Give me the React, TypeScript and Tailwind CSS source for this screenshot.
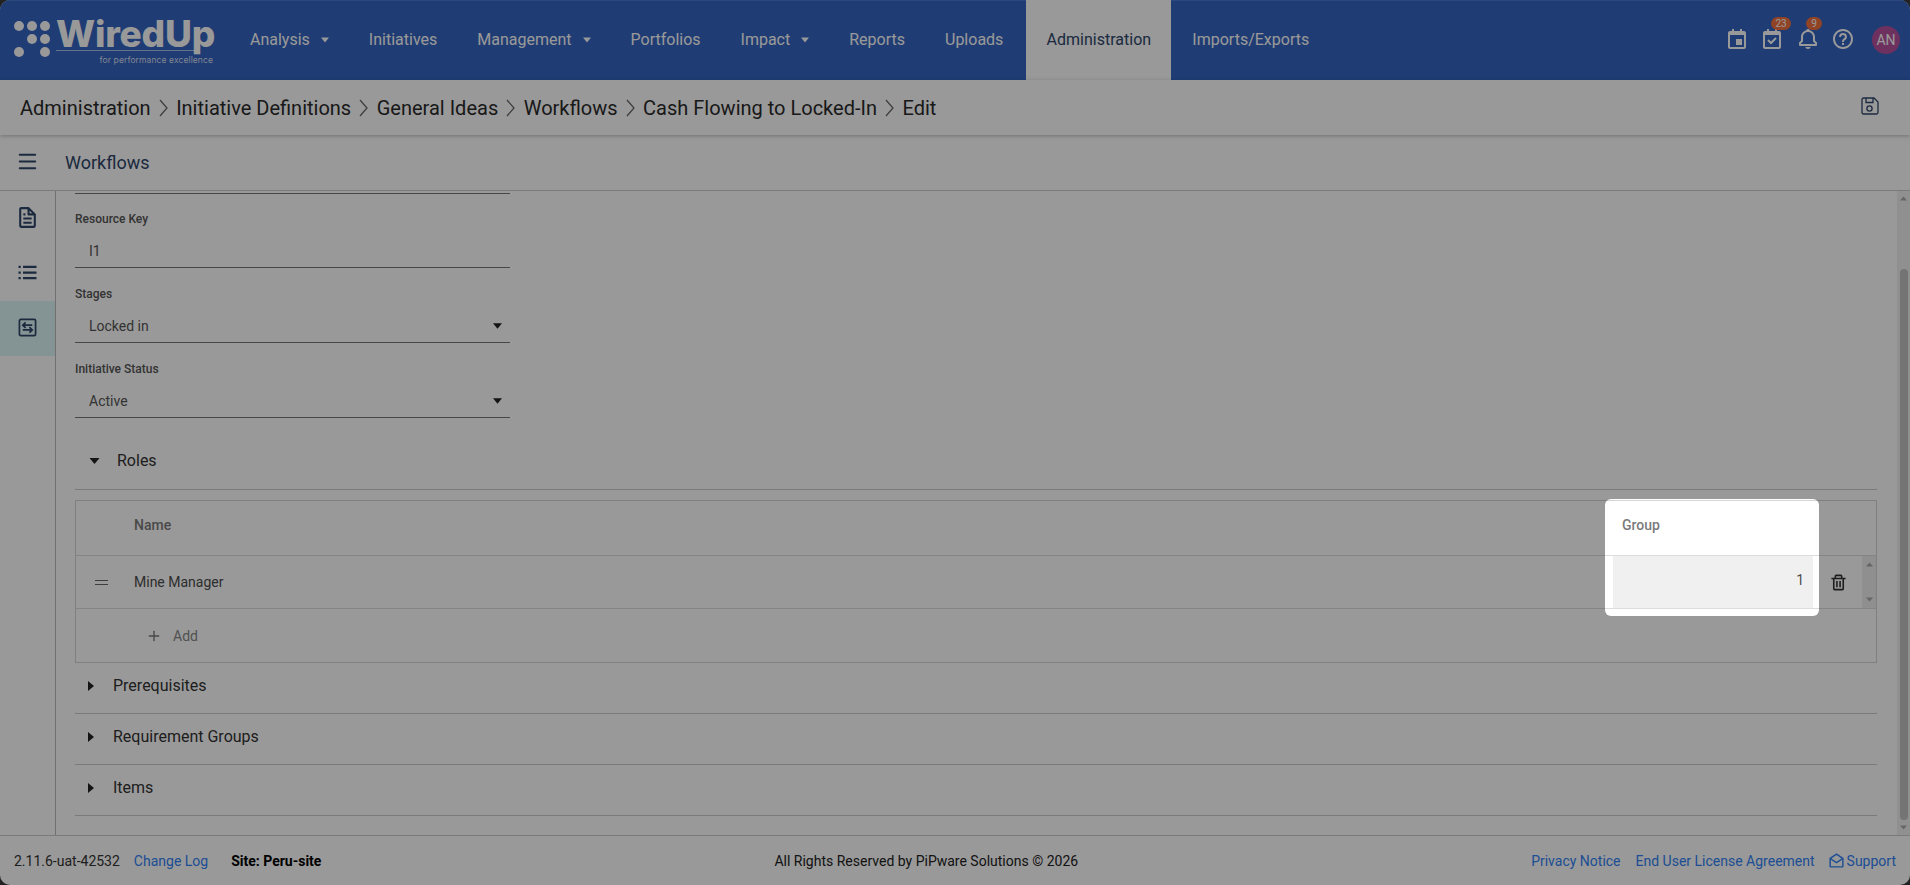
import { Menu, Plus } from 'lucide-react';
import {
  BiBell,
  BiCalendarCheck,
  BiCalendarEvent,
  BiEnvelopeOpen,
  BiFile,
  BiHelpCircle,
  BiListUl,
  BiTrash,
} from 'react-icons/bi';

const navItems = [
  { label: 'Analysis', caret: true },
  { label: 'Initiatives' },
  { label: 'Management', caret: true },
  { label: 'Portfolios' },
  { label: 'Impact', caret: true },
  { label: 'Reports' },
  { label: 'Uploads' },
  { label: 'Administration', active: true },
  { label: 'Imports/Exports' },
];

const crumbs = ['Administration', 'Initiative Definitions', 'General Ideas', 'Workflows', 'Cash Flowing to Locked-In', 'Edit'];

function Caret({ className }: { className: string }) {
  return (
    <svg viewBox="0 0 10 6" className={className} fill="currentColor">
      <path d="M0 0h10L5 6z" />
    </svg>
  );
}

function Logo() {
  return (
    <div className="flex items-start w-[230px] shrink-0 pl-[14px] pt-[16px]">
      <svg viewBox="0 0 42 42" className="w-[42px] h-[42px] mt-[4px] text-white" fill="currentColor">
        <circle cx="5" cy="5" r="5" />
        <circle cx="18" cy="5" r="5" />
        <circle cx="31" cy="5" r="5" />
        <circle cx="18" cy="18" r="5" />
        <circle cx="31" cy="18" r="5" />
        <circle cx="5" cy="31" r="5" />
        <circle cx="31" cy="31" r="5" />
      </svg>
      <div className="w-[157px] text-white font-['Inter',sans-serif]">
        <div className="text-[37px] leading-[33px] font-extrabold tracking-[-0.2px] whitespace-nowrap">WiredUp</div>
        <div className="h-px bg-[#a9c0ea] w-[142px]" />
        <div className="text-right text-[8.5px] leading-[14px] mt-[2px] tracking-[0.1px] text-[#d5dff2] whitespace-nowrap">for performance excellence</div>
      </div>
    </div>
  );
}

function TopNav() {
  return (
    <div className="flex h-[80px] shrink-0 bg-[#3464c1] border-t border-[#4a78cf]">
      <Logo />
      <div className="flex">
        {navItems.map(item => (
          <div
            key={item.label}
            className={`flex items-center gap-[11px] pb-[1px] text-base ${item.active ? 'bg-white text-[#2e4669] -mt-px ml-[3px] mr-[1px] w-[145px] justify-center' : 'px-5 text-white'}`}
          >
            <span>{item.label}</span>
            {item.caret && <Caret className="w-[8px] h-[6px] text-white" />}
          </div>
        ))}
      </div>
      <div className="ml-auto flex items-center pr-[10px] pb-[1px] text-white">
        <div className="w-[35px] flex justify-center pb-[2px]"><BiCalendarEvent size={24} /></div>
        <div className="w-[36px] flex justify-center relative pb-[2px]">
          <BiCalendarCheck size={24} />
          <span className="absolute -top-[10px] left-[17px] w-[20px] h-[13px] rounded-full bg-[#f0703f] text-[10px] leading-[13px] text-center">23</span>
        </div>
        <div className="w-[35px] flex justify-center relative pb-[2px]">
          <BiBell size={24} />
          <span className="absolute -top-[10px] left-[16px] w-[16px] h-[13px] rounded-full bg-[#f0703f] text-[10px] leading-[13px] text-center">9</span>
        </div>
        <div className="w-[36px] flex justify-center pb-[2px]"><BiHelpCircle size={24} /></div>
        <div className="ml-[11px] w-[28px] h-[28px] rounded-full bg-[#b8539f] flex items-center justify-center text-sm">AN</div>
      </div>
    </div>
  );
}

function Breadcrumbs() {
  return (
    <div className="relative z-10 flex items-center h-[55px] shrink-0 pl-[20px] pr-[31px] bg-white shadow-[0_1px_4px_rgba(0,0,0,0.25)]">
      {crumbs.map((crumb, i) => (
        <div key={crumb} className="flex items-center text-[20px] text-[#2b2b2b]">
          <span>{crumb}</span>
          {i < crumbs.length - 1 && (
            <svg viewBox="0 0 9 18" className="w-[9px] h-[18px] mx-[8.25px] text-[#666]" fill="none" stroke="currentColor" strokeWidth="1.25">
              <path d="M1 1l7 8-7 8" />
            </svg>
          )}
        </div>
      ))}
      <svg viewBox="0 0 18 18" className="ml-auto w-[18px] h-[18px] -mt-[3px] text-[#2e4669]" fill="none" stroke="currentColor" strokeWidth="1.3">
        <path d="M2.500 1h10.500l4 4v10.500a1.500 1.500 0 0 1-1.500 1.500h-13a1.500 1.500 0 0 1-1.500-1.500v-13a1.500 1.500 0 0 1 1.500-1.500z" />
        <path d="M5 1v4.500h7V1" />
        <circle cx="8.500" cy="11.500" r="2.600" />
      </svg>
    </div>
  );
}

function Field({ label, value, select, height }: { label: string; value: string; select?: boolean; height: string }) {
  return (
    <div className={`w-[435px] flex flex-col justify-end border-b border-[#777] ${height}`}>
      <div className="text-xs font-medium text-[#555] leading-[16px] mb-[7px]">{label}</div>
      <div className="flex items-center justify-between h-[33px] pl-[14px] pr-[8px] text-sm text-[#555]">
        <span>{value}</span>
        {select && <Caret className="w-[9px] h-[6px] text-[#222]" />}
      </div>
    </div>
  );
}

function Section({ label }: { label: string }) {
  return (
    <div className="flex items-center h-[51px] pb-[4px] pl-[13px] border-b border-[#ccc] text-base text-[#333]">
      <svg viewBox="0 0 6 10" className="w-[6px] h-[10px] mr-[19px] text-[#222]" fill="currentColor">
        <path d="M0 0l6 5-6 5z" />
      </svg>
      <span>{label}</span>
    </div>
  );
}

function RolesTable() {
  return (
    <div className="mt-[10px] border border-[#d5d5d5] text-sm">
      <div className="flex h-[55px] border-b border-[#ddd]">
        <div className="w-[58px] shrink-0" />
        <div className="flex-1 pt-[14px] font-medium text-[#7b7b7b]">Name</div>
        <div className="w-[200px] pt-[14px] pl-[9px] font-medium text-[#7b7b7b]">Group</div>
        <div className="w-[63px]" />
      </div>
      <div className="flex h-[53px] border-b border-[#ddd]">
        <div className="w-[58px] shrink-0 flex items-center justify-center pr-[7px]">
          <div className="w-[13px] h-[5px] border-y border-[#666]" />
        </div>
        <div className="flex-1 flex items-center text-[#4d4d4d]">Mine Manager</div>
        <div className="w-[200px] bg-[#f0f0f0] pt-[14px] pr-[9px] text-right text-[#4d4d4d]">1</div>
        <div className="w-[49px] flex items-center justify-center pl-[2px]"><BiTrash size={19} className="text-[#333]" /></div>
        <div className="w-[14px] bg-[#eee] flex flex-col items-center justify-between py-[6px]">
          <Caret className="w-[7px] h-[5px] text-[#aaa] rotate-180" />
          <Caret className="w-[7px] h-[5px] text-[#aaa]" />
        </div>
      </div>
      <div className="flex items-center h-[53px] pl-[70px] text-[#888]">
        <Plus size={16} strokeWidth={2} className="text-[#777]" />
        <span className="ml-[11px]">Add</span>
      </div>
    </div>
  );
}

function Scrollbar() {
  return (
    <div className="w-[13px] shrink-0 bg-[#f1f1f1] flex flex-col items-center py-[5px]">
      <Caret className="w-[7px] h-[5px] text-[#aaa] rotate-180" />
      <div className="mt-[68px] flex-1 w-[8px] rounded-full bg-[#c1c1c1]" />
      <Caret className="mt-[5px] w-[7px] h-[5px] text-[#aaa]" />
    </div>
  );
}

export default function App() {
  return (
    <div className="h-[885px] w-full bg-[#3a3a3a] overflow-hidden relative font-['Roboto',sans-serif]">
      <div className="h-full flex flex-col bg-white rounded-[10px] overflow-hidden">
        <TopNav />
        <Breadcrumbs />
        <div className="flex items-center h-[56px] shrink-0 border-b border-[#ccc]">
          <div className="w-[55px] flex justify-center pb-[2px]"><Menu size={23} strokeWidth={2.25} className="text-[#2e4669]" /></div>
          <div className="ml-[10px] text-lg text-[#2e4669]">Workflows</div>
        </div>
        <div className="flex flex-1 min-h-0">
          <div className="w-[56px] shrink-0 border-r border-[#bbb]">
            <div className="h-[55px] flex items-center justify-center pb-[2px]"><BiFile size={25} className="text-[#2e4669]" /></div>
            <div className="h-[55px] flex items-center justify-center pb-[2px]"><BiListUl size={27} className="text-[#2e4669]" /></div>
            <div className="h-[55px] flex items-center justify-center pb-[2px] bg-[#dcf5f5]">
              <svg viewBox="0 0 20 20" className="w-[19px] h-[19px] text-[#2e4669]" fill="none" stroke="currentColor" strokeWidth="1.8">
                <rect x="1.500" y="1.500" width="17" height="17" rx="1.500" />
                <path d="M5 7.500h10M8 4.500 5 7.500l3 3M5 12.500h10M12 9.500l3 3-3 3" />
              </svg>
            </div>
          </div>
          <div className="flex-1 min-w-0 overflow-hidden pl-[19px] pr-[20px] pt-[2px]">
            <div className="w-[435px] border-b border-[#777]" />
            <Field label="Resource Key" value="I1" height="h-[74px]" />
            <Field label="Stages" value="Locked in" select height="h-[75px]" />
            <Field label="Initiative Status" value="Active" select height="h-[75px]" />
            <div className="flex items-center h-[72px] pt-[15px] pl-[14px] border-b border-[#ccc] text-base text-[#333]">
              <Caret className="w-[11px] h-[6px] mr-[17px] text-[#222]" />
              <span>Roles</span>
            </div>
            <RolesTable />
            <Section label="Prerequisites" />
            <Section label="Requirement Groups" />
            <Section label="Items" />
          </div>
          <Scrollbar />
        </div>
        <div className="flex items-center justify-between h-[50px] shrink-0 border-t border-[#ccc] pl-[14px] pr-[14px] text-sm text-[#333]">
          <div className="flex items-center">
            <span>2.11.6-uat-42532</span>
            <span className="ml-[14px] text-[#3182f6]">Change Log</span>
            <span className="ml-[23px] font-bold text-black">Site: Peru-site</span>
          </div>
          <div className="text-[#222]">All Rights Reserved by PiPware Solutions © 2026</div>
          <div className="flex items-center text-[#3182f6]">
            <span>Privacy Notice</span>
            <span className="ml-[15px]">End User License Agreement</span>
            <BiEnvelopeOpen size={17} className="ml-[13px] mr-[2px]" />
            <span>Support</span>
          </div>
        </div>
      </div>
      {/* spotlight on the Group column */}
      <div className="absolute z-20 left-[1605px] top-[499px] w-[214px] h-[117px] rounded-[6px] shadow-[0_0_0_3000px_rgba(0,0,0,0.4)] pointer-events-none" />
    </div>
  );
}
